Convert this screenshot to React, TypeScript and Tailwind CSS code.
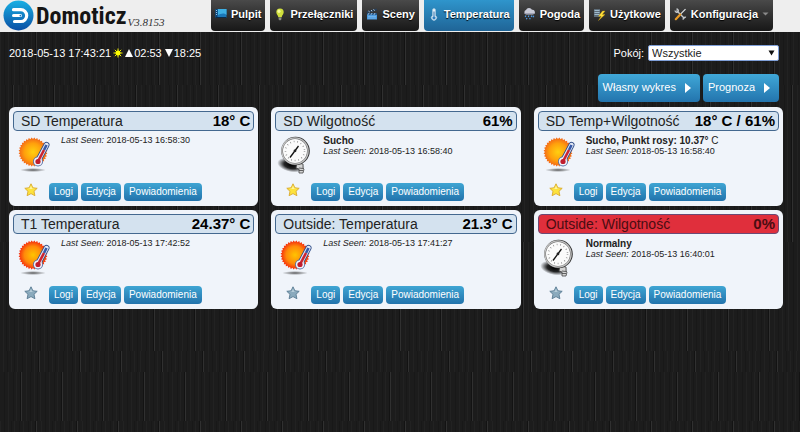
import type { ReactNode } from 'react'

type Kind = 'sun' | 'hotsun' | 'gauge'

interface Device {
  name: string
  value: string
  status?: string
  statusUnit?: string
  lastSeen: string
  kind: Kind
  favorite: boolean
  timedOut?: boolean
}

const devices: Device[] = [
  { name: 'SD Temperatura', value: '18° C', lastSeen: '2018-05-13 16:58:30', kind: 'sun', favorite: true },
  { name: 'SD Wilgotność', value: '61%', status: 'Sucho', lastSeen: '2018-05-13 16:58:40', kind: 'gauge', favorite: true },
  {
    name: 'SD Temp+Wilgotność',
    value: '18° C / 61%',
    status: 'Sucho, Punkt rosy: 10.37°',
    statusUnit: ' C',
    lastSeen: '2018-05-13 16:58:40',
    kind: 'sun',
    favorite: true,
  },
  { name: 'T1 Temperatura', value: '24.37° C', lastSeen: '2018-05-13 17:42:52', kind: 'hotsun', favorite: false },
  { name: 'Outside: Temperatura', value: '21.3° C', lastSeen: '2018-05-13 17:41:27', kind: 'hotsun', favorite: false },
  {
    name: 'Outside: Wilgotność',
    value: '0%',
    status: 'Normalny',
    lastSeen: '2018-05-13 16:40:01',
    kind: 'gauge',
    favorite: false,
    timedOut: true,
  },
]

const DesktopIcon = () => (
  <svg width="12" height="12" viewBox="0 0 12 12" aria-hidden="true">
    <rect x="0.5" y="1" width="11" height="9" fill="#1b78b8" />
    <path d="M3 1h8.500v6c-3-3-6-1-8.500 0z" fill="#3fb0e4" />
    <path d="M0.500 1h2v9h-2z" fill="#0b3e6e" />
    <path d="M1 2.500h1M1 4.500h1M1 6.500h1" stroke="#bfe6ff" strokeWidth="0.800" />
    <path d="M0.500 9.500h11" stroke="#0a2c4c" />
  </svg>
)

const BulbIcon = () => (
  <svg width="12" height="13" viewBox="0 0 12 13" aria-hidden="true">
    <path d="M6 0.500a3.700 3.700 0 0 1 3.700 3.800c0 2-1.700 2.700-2 5H4.300c-.3-2.300-2-3-2-5A3.700 3.700 0 0 1 6 .5z" fill="#cfdf3c" />
    <ellipse cx="5" cy="3.200" rx="1.500" ry="1.800" fill="#f5fb9c" />
    <path d="M4.600 9.500h2.800v2L6 12.500l-1.400-1z" fill="#8c8f86" />
  </svg>
)

const ClapperIcon = () => (
  <svg width="12" height="12" viewBox="0 0 12 12" aria-hidden="true">
    <path d="M1 5h10v6.500H1z" fill="#4b9be0" />
    <path d="M1 5h10v1.800H1z" fill="#1f4d7c" />
    <path d="M0.500 3.500l10-3 .6 1.800-10 2.700z" fill="#27405c" />
    <path d="M2.500 3l1.200 1M5 2.200l1.200 1M7.500 1.500l1.200 1M2 6.700l1-1.500M5 6.700l1-1.500M8 6.700l1-1.500" stroke="#d6ecff" strokeWidth="0.900" />
    <path d="M2 8.500h8M2 10h8" stroke="#8cc4f2" strokeWidth="0.600" />
  </svg>
)

const ThermometerIcon = () => (
  <svg width="12" height="13" viewBox="0 0 12 13" aria-hidden="true">
    <path d="M4.500 2a1.500 1.500 0 0 1 3 0v5.600a2.600 2.600 0 1 1-3 0z" fill="#e4f1fa" stroke="#a7cbe2" strokeWidth="0.600" />
    <path d="M6 3.500v5" stroke="#2f6fa8" />
    <circle cx="6" cy="9.800" r="1.600" fill="#2f7fc0" />
  </svg>
)

const RainIcon = () => (
  <svg width="13" height="12" viewBox="0 0 13 12" aria-hidden="true">
    <path d="M3 6.500a2.300 2.300 0 0 1 0-4.400A3.300 3.300 0 0 1 9 1.800a2.400 2.400 0 0 1 1 4.700z" fill="#c9cbd8" />
    <path d="M1.500 5.500h10" stroke="#9a9db2" strokeWidth="0.900" />
    <path d="M3 7.500l-.8 1.500M6 7.500l-.8 1.500M9 7.500l-.8 1.500M10.800 7.800l-.8 1.500M4 10l-.6 1.300M7.200 10l-.6 1.300" stroke="#4f9be8" strokeWidth="1.200" />
  </svg>
)

const UtilityIcon = () => (
  <svg width="13" height="13" viewBox="0 0 13 13" aria-hidden="true">
    <path d="M1 1h6v8H1z" fill="#5d6c78" />
    <path d="M1.500 2.500h5M1.500 4.500h5M1.500 6.500h5" stroke="#a8c4d6" strokeWidth="0.900" />
    <path d="M9.500 3L5.500 8.200h2.700L5.500 12.500l6.500-6H9.300L12 3z" fill="#ffe23a" stroke="#c99a10" strokeWidth="0.400" />
  </svg>
)

const ToolsIcon = () => (
  <svg width="13" height="13" viewBox="0 0 13 13" aria-hidden="true">
    <path d="M2.500 2.500l8 8" stroke="#c4c8cc" strokeWidth="1.500" />
    <path d="M1 2.500a2 2 0 0 0 3 1.500M2.500 1a2 2 0 0 1 1.700 2.800M9.300 11.800a2 2 0 0 1 2.700-2.500" stroke="#c4c8cc" strokeWidth="1.300" fill="none" />
    <path d="M11.500 1.200L6.500 6.200" stroke="#dfe2e4" strokeWidth="1.200" />
    <path d="M6.200 6.500L1.800 11.200" stroke="#e89a25" strokeWidth="2.200" strokeLinecap="round" />
  </svg>
)

const LogoIcon = () => (
  <svg width="31" height="31" viewBox="0 0 31 31" aria-hidden="true">
    <defs>
      <linearGradient id="logo" x1="0" y1="0" x2="0" y2="1">
        <stop offset="0" stopColor="#18b0e4" />
        <stop offset="1" stopColor="#0b4fa4" />
      </linearGradient>
    </defs>
    <circle cx="15.500" cy="15.500" r="15" fill="url(#logo)" />
    <path d="M10.500 9.700h7.300a5.900 5.900 0 0 1 0 11.800H11.500" stroke="#fff" strokeWidth="3.200" fill="none" strokeLinecap="round" />
    <path d="M10.500 15.600h7" stroke="#fff" strokeWidth="3" strokeLinecap="round" />
    <circle cx="17.400" cy="15.600" r="0.900" fill="#0f70bd" />
  </svg>
)

const sunTeeth = Array.from({ length: 64 }, (_, i) => {
  const r = i % 2 ? 14.5 : 13
  const a = (i / 64) * Math.PI * 2
  return `${(15 + r * Math.cos(a)).toFixed(2)},${(15 + r * Math.sin(a)).toFixed(2)}`
}).join(' ')

const SunIcon = ({ hot }: { hot: boolean }) => {
  const id = hot ? 'sun-hot' : 'sun-warm'
  return (
    <svg width="34" height="36" viewBox="0 0 34 36" aria-hidden="true">
      <defs>
        <radialGradient id={id}>
          <stop offset="0" stopColor={hot ? '#ffc400' : '#ffd010'} />
          <stop offset="0.600" stopColor={hot ? '#ff8a0a' : '#ffa00c'} />
          <stop offset="1" stopColor={hot ? '#f4280f' : '#f2641a'} />
        </radialGradient>
        <radialGradient id={`${id}-shade`}>
          <stop offset="0" stopColor="#333" stopOpacity="0.800" />
          <stop offset="1" stopColor="#333" stopOpacity="0" />
        </radialGradient>
      </defs>
      <ellipse cx="15" cy="33" rx="13" ry="2" fill={`url(#${id}-shade)`} />
      <polygon points={sunTeeth} fill={`url(#${id})`} />
      <path d="M28.500 8L20.500 23" stroke="#2c4a86" strokeWidth="6" strokeLinecap="round" />
      <circle cx="20" cy="24.500" r="5" fill="#5870a4" />
      <path d="M28.500 8L20.500 23" stroke="#e3e9f6" strokeWidth="4.400" strokeLinecap="round" />
      <circle cx="20" cy="24.500" r="4.100" fill="#f0f2fa" />
      <path d="M28.500 8L26 13" stroke="#3759a8" strokeWidth="2.600" />
      <path d="M26 13L20.500 23.500" stroke="#cc2430" strokeWidth="2.600" />
      <circle cx="20" cy="24.500" r="2.600" fill="#c01c2c" />
    </svg>
  )
}

const GaugeIcon = () => (
  <svg width="36" height="40" viewBox="0 0 36 40" aria-hidden="true">
    <defs>
      <radialGradient id="gauge-shade">
        <stop offset="0" stopColor="#000" />
        <stop offset="0.500" stopColor="#000" stopOpacity="0.850" />
        <stop offset="1" stopColor="#000" stopOpacity="0" />
      </radialGradient>
    </defs>
    <ellipse cx="14" cy="30" rx="14" ry="7" transform="rotate(12 14 30)" fill="url(#gauge-shade)" />
    <path d="M20 28l6 1v4l1 1-1 4h-4v-4l-3-1z" fill="#d4d4d4" stroke="#444" strokeWidth="0.800" />
    <path d="M22 33l4 .5M22 35.500h4" stroke="#444" strokeWidth="0.800" />
    <circle cx="18.500" cy="16" r="14.300" fill="#333" />
    <circle cx="18" cy="16" r="13.800" fill="#c4c4c4" />
    <circle cx="18" cy="16" r="12.500" fill="#666" />
    <circle cx="18" cy="16" r="12" fill="#fbfbfb" />
    <circle cx="18" cy="16" r="9.500" fill="none" stroke="#888" strokeWidth="1.600" strokeDasharray="0.700 2.900" />
    <path d="M21.500 11L13 22.500" stroke="#111" strokeWidth="1.300" />
    <circle cx="18" cy="15.800" r="1.400" fill="#222" />
  </svg>
)

const StarIcon = ({ on }: { on: boolean }) => (
  <svg width="14" height="14" viewBox="0 0 14 14" aria-hidden="true">
    <path
      d="M7 .8l1.900 4 4.300.5-3.200 3 .9 4.400L7 10.600l-3.900 2.100.9-4.400-3.200-3 4.300-.5z"
      fill={on ? '#fde23c' : '#8aaabd'}
      stroke={on ? '#d9a92c' : '#587b92'}
      strokeWidth="0.900"
      strokeLinejoin="round"
    />
    <path d="M7 2.500l1.200 3 2.800.4H3l2.800-.4z" fill={on ? '#fff59a' : '#b5ccd8'} />
  </svg>
)

// Dark wood texture: courses of planks, each with shifted seams
const courses = [
  { y: 0, h: 85, x: 36 },
  { y: 85, h: 157, x: 13 },
  { y: 242, h: 109, x: 31 },
  { y: 351, h: 21, x: 39 },
  { y: 372, h: 49, x: 21 },
  { y: 421, h: 60, x: 36 },
]

const Backdrop = () => (
  <svg className="absolute inset-0 -z-10 h-full w-full" aria-hidden="true">
    <defs>
      {courses.map((row) => (
        <pattern key={row.y} id={`wood-${row.y}`} x={row.x} y="0" width="41" height="481" patternUnits="userSpaceOnUse">
          <rect width="41" height="481" fill="#1c1c1c" />
          <path d="M5.500 0v481M13.500 0v481M19.500 0v481M28.500 0v481M36.500 0v481" stroke="#222222" />
          <path d="M9.500 0v481M16.500 0v481M24.500 0v481M33.500 0v481" stroke="#181818" />
          <path d="M0.500 0v481" stroke="#303030" />
          <path d="M40.500 0v481" stroke="#131313" />
        </pattern>
      ))}
      <pattern id="wood" width="100%" height="481" patternUnits="userSpaceOnUse">
        {courses.map((row) => (
          <rect key={row.y} y={row.y} width="100%" height={row.h} fill={`url(#wood-${row.y})`} />
        ))}
      </pattern>
    </defs>
    <rect width="100%" height="100%" fill="url(#wood)" />
  </svg>
)

const navItems: { label: string; icon: ReactNode; active?: boolean; menu?: boolean }[] = [
  { label: 'Pulpit', icon: <DesktopIcon /> },
  { label: 'Przełączniki', icon: <BulbIcon /> },
  { label: 'Sceny', icon: <ClapperIcon /> },
  { label: 'Temperatura', icon: <ThermometerIcon />, active: true },
  { label: 'Pogoda', icon: <RainIcon /> },
  { label: 'Użytkowe', icon: <UtilityIcon /> },
  { label: 'Konfiguracja', icon: <ToolsIcon />, menu: true },
]

const Header = () => (
  <header className="flex h-8 items-start justify-between bg-[#eeeeee] pr-[27px]">
    <a href="#" className="flex items-start pl-[3px]">
      <LogoIcon />
      <span className="pl-0.5 font-['Liberation_Sans_Narrow','Roboto_Condensed',sans-serif] text-2xl leading-8 font-bold text-[#151515]">
        Domoticz
      </span>
      <span className="pt-4 pl-px font-['Liberation_Serif',serif] text-[11px] leading-3 text-[#333333] italic">V3.8153</span>
    </a>
    <nav className="flex gap-[5px]">
      {navItems.map((item) => (
        <a
          key={item.label}
          href="#"
          className={`flex h-[31px] items-center gap-1 rounded-b-sm px-1 pb-[3px] text-[11px] font-bold whitespace-nowrap text-white [text-shadow:0_1px_1px_#000] ${
            item.active
              ? 'bg-linear-to-b from-[#2f95cc] to-[#1f6597]'
              : 'bg-linear-to-b from-[#4a4a4a] to-[#181818]'
          }`}
        >
          {item.icon}
          {item.label}
          {item.menu && (
            <svg width="7" height="5" viewBox="0 0 7 5" aria-hidden="true">
              <path d="M0.500 0.500h6L3.500 3.500z" fill="#8a8a8a" />
            </svg>
          )}
        </a>
      ))}
    </nav>
  </header>
)

const ArrowButton = ({ label }: { label: string }) => (
  <button
    type="button"
    className="flex h-7 items-center gap-2 rounded-sm bg-linear-to-b from-[#40a8d8] to-[#2374ad] pr-2 pl-[5px] text-[11px] text-white"
  >
    {label}
    <svg width="8" height="11" viewBox="0 0 8 11" aria-hidden="true">
      <path d="M1 1l6 5-6 5z" fill="#fff" />
    </svg>
  </button>
)

const DeviceCard = ({ device }: { device: Device }) => (
  <article className="rounded-md bg-[#f0f4fa] p-1 pb-[5px]">
    <header
      className={`flex h-5 items-center justify-between rounded-sm border pr-[3px] pl-[7px] whitespace-nowrap ${
        device.timedOut ? 'border-[#6b4a75] bg-[#e02f3c] text-[#4a0d12]' : 'border-[#44688f] bg-[#d4e2ef] text-[#222222]'
      }`}
    >
      <h2 className="text-sm leading-4">{device.name}</h2>
      <span className={`text-[15px] leading-4 font-bold ${device.timedOut ? '' : 'text-black'}`}>{device.value}</span>
    </header>
    <div className="flex h-[52px] pt-1">
      <div className={device.kind === 'gauge' ? 'w-12 pl-0.5' : 'w-12 pt-0.5 pl-[5px]'}>
        {device.kind === 'gauge' ? <GaugeIcon /> : <SunIcon hot={device.kind === 'hotsun'} />}
      </div>
      <div className="text-[#222222]">
        {device.status && (
          <p className="text-[10px] leading-[11px]">
            <b>{device.status}</b>
            {device.statusUnit}
          </p>
        )}
        <p className="text-[9px] leading-[11px]">
          <i>Last Seen:</i> {device.lastSeen}
        </p>
      </div>
    </div>
    <div className="flex items-center gap-[3px] pl-[11px]">
      <button type="button" aria-label="Ulubione" className="mr-2 pb-1">
        <StarIcon on={device.favorite} />
      </button>
      {['Logi', 'Edycja', 'Powiadomienia'].map((label) => (
        <button
          key={label}
          type="button"
          className="h-[18px] rounded-sm bg-linear-to-b from-[#3fa5d3] to-[#2273ac] px-[5px] text-[10px] leading-4 text-white"
        >
          {label}
        </button>
      ))}
    </div>
  </article>
)

export default function App() {
  return (
    <div className="relative isolate min-h-screen bg-[#1d1d1d] font-['Liberation_Sans',sans-serif]">
      <Backdrop />
      <Header />
      <main className="pr-[17px] pl-[9px]">
        <div className="flex items-center justify-between pt-[13px] pr-1 text-[11px] text-white">
          <p className="flex items-center gap-0.5">
            <span>2018-05-13 17:43:21</span>
            <svg width="10" height="10" viewBox="0 0 10 10" aria-hidden="true">
              <path d="M5 .5v9M.5 5h9M1.800 1.800l6.400 6.400M8.200 1.800L1.800 8.200" stroke="#f4f000" />
              <circle cx="5" cy="5" r="2.500" fill="#ffff00" />
            </svg>
            <span className="flex items-center gap-px pr-px">
              <svg width="8" height="8" viewBox="0 0 8 8" aria-hidden="true">
                <path d="M4 0l4 8H0z" fill="#fff" />
              </svg>
              02:53
            </span>
            <span className="flex items-center gap-px">
              <svg width="8" height="8" viewBox="0 0 8 8" aria-hidden="true">
                <path d="M0 0h8L4 8z" fill="#fff" />
              </svg>
              18:25
            </span>
          </p>
          <div className="flex items-center gap-1">
            <label htmlFor="room">Pokój:</label>
            <div className="relative">
              <select
                id="room"
                className="block h-4 w-[131px] appearance-none rounded-xs border border-[#7f9fd8] bg-white pl-[3px] text-[11px] leading-[14px] text-[#222222]"
              >
                <option>Wszystkie</option>
              </select>
              <svg className="pointer-events-none absolute top-[5px] right-1" width="7" height="6" viewBox="0 0 7 6" aria-hidden="true">
                <path d="M0.500 0.500h6L3.500 5.500z" fill="#111" />
              </svg>
            </div>
          </div>
        </div>
        <div className="flex justify-end gap-[3px] pt-3 pr-1 pb-[5px]">
          <ArrowButton label="Własny wykres" />
          <ArrowButton label="Prognoza" />
        </div>
        <section className="grid grid-cols-3 gap-x-[13px] gap-y-1">
          {devices.map((device) => (
            <DeviceCard key={device.name} device={device} />
          ))}
        </section>
      </main>
    </div>
  )
}
